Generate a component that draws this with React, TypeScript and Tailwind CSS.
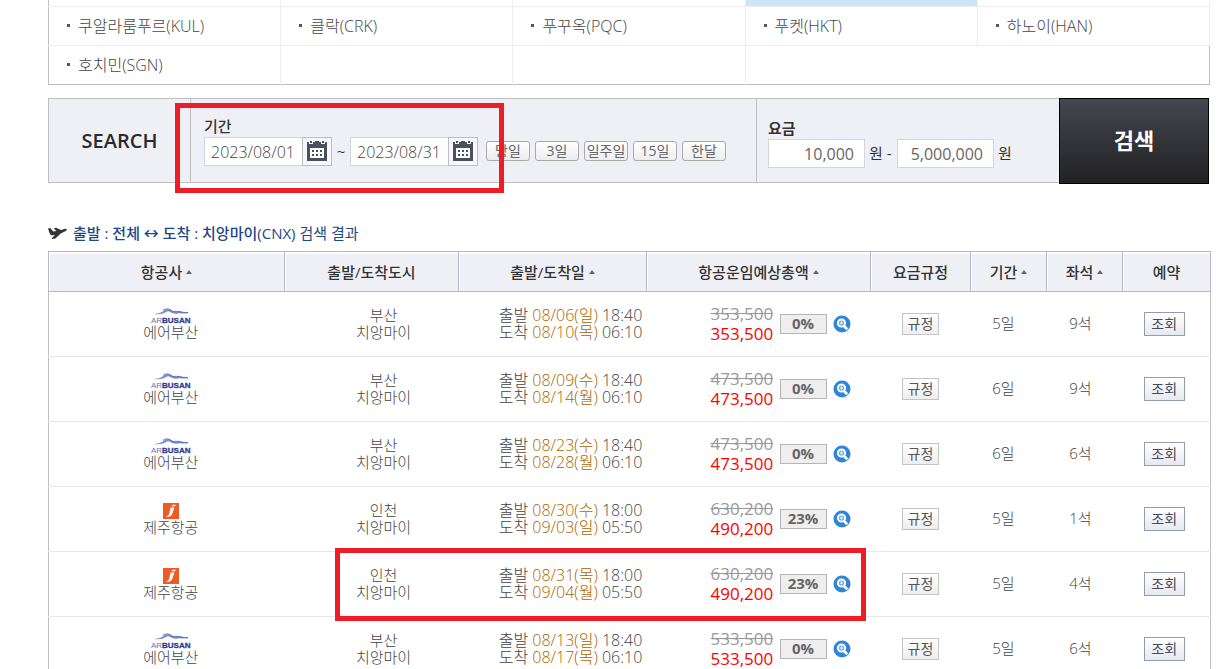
import { useState } from "react";

type Flight = {
  airline: "busan" | "jeju";
  city: string;
  dep: string;
  depTime: string;
  arr: string;
  arrTime: string;
  origin: string;
  price: string;
  rate: string;
  days: string;
  seats: string;
};

const cities = [
  ["쿠알라룸푸르(KUL)", "클락(CRK)", "푸꾸옥(PQC)", "푸켓(HKT)", "하노이(HAN)"],
  ["호치민(SGN)", "", "", "", ""],
];

const quickRanges = ["당일", "3일", "일주일", "15일", "한달"];

const columns = [
  { name: "항공사", sort: true, width: "w-[236px]" },
  { name: "출발/도착도시", sort: false, width: "w-[174px]" },
  { name: "출발/도착일", sort: true, width: "w-[188px]" },
  { name: "항공운임예상총액", sort: true, width: "w-[224px]" },
  { name: "요금규정", sort: false, width: "w-[100px]" },
  { name: "기간", sort: true, width: "w-[76px]" },
  { name: "좌석", sort: true, width: "w-[76px]" },
  { name: "예약", sort: false, width: "w-[88px]" },
];

const flights: Flight[] = [
  { airline: "busan", city: "부산", dep: "08/06(일)", depTime: "18:40", arr: "08/10(목)", arrTime: "06:10", origin: "353,500", price: "353,500", rate: "0%", days: "5일", seats: "9석" },
  { airline: "busan", city: "부산", dep: "08/09(수)", depTime: "18:40", arr: "08/14(월)", arrTime: "06:10", origin: "473,500", price: "473,500", rate: "0%", days: "6일", seats: "9석" },
  { airline: "busan", city: "부산", dep: "08/23(수)", depTime: "18:40", arr: "08/28(월)", arrTime: "06:10", origin: "473,500", price: "473,500", rate: "0%", days: "6일", seats: "6석" },
  { airline: "jeju", city: "인천", dep: "08/30(수)", depTime: "18:00", arr: "09/03(일)", arrTime: "05:50", origin: "630,200", price: "490,200", rate: "23%", days: "5일", seats: "1석" },
  { airline: "jeju", city: "인천", dep: "08/31(목)", depTime: "18:00", arr: "09/04(월)", arrTime: "05:50", origin: "630,200", price: "490,200", rate: "23%", days: "5일", seats: "4석" },
  { airline: "busan", city: "부산", dep: "08/13(일)", depTime: "18:40", arr: "08/17(목)", arrTime: "06:10", origin: "533,500", price: "533,500", rate: "0%", days: "5일", seats: "6석" },
];

function CalendarIcon() {
  return (
    <svg width="20" height="20" viewBox="0 0 20 20">
      <path d="M0 1h2v2h4V1h8v2h4V1h2v19H0z" fill="#4b505f" />
      <path d="M3 0h2v2H3zM15 0h2v2h-2zM8 0h4v1H8z" fill="#4b505f" />
      <rect x="3" y="7" width="14" height="10" fill="#fff" />
      <path d="M5 9h2v2H5zM9 9h2v2H9zM13 9h2v2h-2zM5 13h2v2H5zM9 13h2v2H9zM13 13h2v2h-2z" fill="#4b505f" />
    </svg>
  );
}

function PlaneIcon() {
  return (
    <svg width="19" height="14" viewBox="0 0 19 14">
      <path d="M0 2.600l2.200-.6 3.100 3.400 3.200-.3L5.700 2.400l2.200-.6 5.300 2.300 3-1.200c1.300-.4 2.400-.1 2.500.5.1.8-.8 1.600-2 2.200l-4 2-5.300 4.800-3.500.7-.3-.6 3.300-3.400-2.600.2C3 9.200 2.100 8.500 1.600 7.200z" fill="#333" />
    </svg>
  );
}

function BusanLogo() {
  return (
    <svg width="40" height="17" viewBox="0 0 40 17" className="block">
      <path d="M3 7c5-.5 8-1.500 11-4 2-1.500 5-.8 7 1 2 1.200 4 1.200 6 .6 3-1 6 2 11 1.400-4 1.600-8-.6-11 .4-3 .8-5 .2-7-.8-2-1.600-3-2-5-.6C12 7 8 7.600 3 7z" fill="#6f93c8" />
      <path d="M12 3.500c3-2.500 6-2 10 1M22 4.500c5-1 9 1.500 15 1" fill="none" stroke="#44529c" strokeWidth="0.800" />
      <text x="0" y="16" fontSize="8" fontFamily="Liberation Sans, sans-serif" fill="#6a73b3">AR</text>
      <text x="11" y="16" fontSize="8" fontWeight="700" fontFamily="Liberation Sans, sans-serif" fill="#2c3990" stroke="#2c3990" strokeWidth="0.300">BUSAN</text>
    </svg>
  );
}

function JejuLogo() {
  return (
    <svg width="16" height="17" viewBox="0 0 16 17" className="block">
      <rect y="1" width="16" height="16" fill="#f15a22" />
      <path d="M7.600 5.500h3.800L9.200 12c-.7 2-2.500 2.800-6.700 2.800 2.200-.7 3.100-1.500 3.700-3.300z" fill="#fff" />
      <path d="M8.300 4.300c.5-1.200 1.500-1.600 4.400-1.600l-.6 1.600z" fill="#fff" />
    </svg>
  );
}

function SearchIcon() {
  return (
    <svg width="18" height="18" viewBox="0 0 18 18">
      <circle cx="9" cy="9" r="8.500" fill="#2f86d6" />
      <circle cx="8.500" cy="8" r="3.600" fill="#62aaea" stroke="#fff" strokeWidth="2" />
      <path d="M8.500 6.500v3M7 8h3" stroke="#fff" strokeWidth="1" />
      <path d="M11.500 11.500l2 2" stroke="#fff" strokeWidth="2.600" strokeLinecap="round" />
    </svg>
  );
}

function DateInput({ id, label, value, onChange }: { id: string; label: string; value: string; onChange: (v: string) => void }) {
  return (
    <div className="flex">
      <input id={id} aria-label={label} value={value} onChange={(e) => onChange(e.target.value)} className="h-[29px] w-[98px] border border-r-0 border-[#d5d5d8] bg-white px-1.5 pt-0.5 text-base font-light text-[#444] outline-none" />
      <button aria-label={`${label} 달력`} className="flex h-[29px] w-[30px] items-center justify-center border border-[#bdbdc6] bg-[#f8f8fb]">
        <CalendarIcon />
      </button>
    </div>
  );
}

function PriceInput({ label, value, onChange }: { label: string; value: string; onChange: (v: string) => void }) {
  return <input aria-label={label} value={value} onChange={(e) => onChange(e.target.value)} className="h-[29px] w-[97px] border border-[#d5d5d8] bg-white pt-0.5 pr-2.5 text-right text-base text-[#666] outline-none" />;
}

function CityTable() {
  return (
    <table className="w-full table-fixed border-collapse border border-t-0 border-[#bfbfbf] text-base font-light text-[#444]">
      <tbody>
        <tr className="h-[6px]">
          {[0, 1, 2, 3, 4].map((i) => (
            <td key={i} className={i === 3 ? "border-r border-[#eee] bg-[#cfe4f9]" : "border-r border-[#eee]"}></td>
          ))}
        </tr>
        {cities.map((row, r) => (
          <tr key={r} className="h-[39px]">
            {row.map((city, i) => (
              <td key={i} className={r === 1 && i > 2 ? "border-t border-[#eee]" : "border-t border-r border-[#eee]"}>
                {city && (
                  <a href="#" className="flex items-center gap-2 pl-[18px] leading-5">
                    <span className="size-[3px] bg-[#555]"></span>
                    {city}
                  </a>
                )}
              </td>
            ))}
          </tr>
        ))}
      </tbody>
    </table>
  );
}

function SearchBar() {
  const [from, setFrom] = useState("2023/08/01");
  const [to, setTo] = useState("2023/08/31");
  const [min, setMin] = useState("10,000");
  const [max, setMax] = useState("5,000,000");

  return (
    <form className="mt-[13px] mr-0.5 flex h-[86px]" onSubmit={(e) => e.preventDefault()}>
      <div className="flex h-[85px] flex-1 border border-r-0 border-[#bfbfc3] bg-[#eff0f5]">
        <h2 className="flex w-[142px] items-center justify-center border-r border-[#bfbfc3] pt-0.5 font-['Open_Sans'] text-xl font-semibold text-[#2b2b2b]">
          SEARCH
        </h2>
        <div className="relative flex-1 pt-4 pl-[13px]">
          <label htmlFor="from" className="block text-[15px] leading-[22px] font-medium text-[#333]">기간</label>
          <div className="flex items-center">
            <DateInput id="from" label="출발일" value={from} onChange={setFrom} />
            <span className="w-[18px] text-center text-[15px] text-[#333]">~</span>
            <DateInput id="to" label="도착일" value={to} onChange={setTo} />
            <div className="ml-2 flex gap-[5px]">
              {quickRanges.map((q) => (
                <button key={q} className="h-5 w-11 rounded-[3px] border border-[#aaa] bg-linear-to-b from-white to-[#ededf0] text-sm leading-[18px] whitespace-nowrap text-[#666]">
                  {q}
                </button>
              ))}
            </div>
          </div>
          <div className="pointer-events-none absolute top-1 -left-4 h-[90px] w-[329px] border-5 border-[#ee1c25]"></div>
        </div>
        <div className="w-[303px] border-l border-[#bfbfc3] pt-[18px] pl-[11px] text-[15px] text-[#333]">
          <div className="leading-[22px] font-bold">요금</div>
          <div className="flex items-center gap-1">
            <PriceInput label="최소 요금" value={min} onChange={setMin} />
            <span className="w-6 whitespace-nowrap">원 -</span>
            <PriceInput label="최대 요금" value={max} onChange={setMax} />
            <span>원</span>
          </div>
        </div>
      </div>
      <button className="w-[150px] border border-black bg-linear-to-b from-[#454751] to-[#222224] text-[22px] font-bold text-white">
        검색
      </button>
    </form>
  );
}

function FlightRow({ f }: { f: Flight }) {
  return (
    <tr className="h-[65px] border-b border-[#e8e8e8] leading-[17px]">
      <td className="pl-2">
        <div className="flex flex-col items-center">
          {f.airline === "busan" ? <BusanLogo /> : <JejuLogo />}
          <span>{f.airline === "busan" ? "에어부산" : "제주항공"}</span>
        </div>
      </td>
      <td className="pl-6 text-center">
        <div>{f.city}</div>
        <div>치앙마이</div>
      </td>
      <td className="pl-9 text-center text-base leading-[17px] whitespace-nowrap">
        <div>
          출발 <span className="text-[#a86500]">{f.dep}</span> {f.depTime}
        </div>
        <div>
          도착 <span className="text-[#a86500]">{f.arr}</span> {f.arrTime}
        </div>
      </td>
      <td className="pl-16 font-normal">
        <div className="flex items-center">
          <div className="w-[69px] text-[17px] leading-5">
            <del className="block text-[#999]">{f.origin}</del>
            <span className="block text-[#f00]">{f.price}</span>
          </div>
          <span className="flex h-5 w-[47px] items-center justify-center border border-[#b5b5b5] bg-[#eee] font-bold text-[#666]">{f.rate}</span>
          <button aria-label="요금 상세" className="ml-1.5">
            <SearchIcon />
          </button>
        </div>
      </td>
      <td className="text-center">
        <button className="h-[22px] w-[37px] border border-[#c4c4c4] bg-linear-to-b from-white to-[#eee] text-sm leading-5 font-normal text-[#555]">규정</button>
      </td>
      <td className="pr-2.5 text-center">{f.days}</td>
      <td className="pr-2 text-center">{f.seats}</td>
      <td className="pr-1 text-center">
        <button className="h-6 w-[41px] border border-[#929db0] bg-linear-to-b from-white to-[#e6e9f1] text-sm leading-[22px] font-normal text-[#444b5c]">조회</button>
      </td>
    </tr>
  );
}

export default function App() {
  return (
    <main className="h-screen overflow-hidden bg-white pr-[18px] pl-12 font-['Open_Sans','Noto_Sans_CJK_KR',sans-serif]">
      <div className="mr-px">
        <CityTable />
      </div>
      <SearchBar />
      <h3 className="mt-[38px] flex h-[22px] items-center gap-1.5 text-[15px] text-[#1d4886]">
        <PlaneIcon />
        <span className="leading-[22px]">
          <strong className="font-medium">출발 : 전체 ↔ 도착 : 치앙마이(CNX)</strong> 검색 결과
        </span>
      </h3>
      <div className="relative mt-[7px]">
        <table className="w-full table-fixed border-collapse border border-[#bfbfc6] text-[15px] font-light text-[#444]">
          <thead>
            <tr className="h-10 border border-[#b5b7cb] bg-[#eff0f5] text-[#333]">
              {columns.map((c) => (
                <th key={c.name} className={`${c.width} border border-[#b5b7cb] p-0 pt-0.5 font-medium whitespace-nowrap inset-shadow-[1px_2px_0_#fff]`}>
                  {c.sort ? (
                    <button className="inline-flex items-center gap-1">
                      {c.name}
                      <svg width="6" height="4" viewBox="0 0 6 4">
                        <path d="M3 0l3 4H0z" fill="#666" />
                      </svg>
                    </button>
                  ) : (
                    c.name
                  )}
                </th>
              ))}
            </tr>
          </thead>
          <tbody>
            {flights.map((f, i) => (
              <FlightRow key={i} f={f} />
            ))}
          </tbody>
        </table>
        <div className="pointer-events-none absolute top-[297px] right-[345px] left-[287px] h-[73px] border-5 border-[#ee1c25]"></div>
      </div>
    </main>
  );
}
